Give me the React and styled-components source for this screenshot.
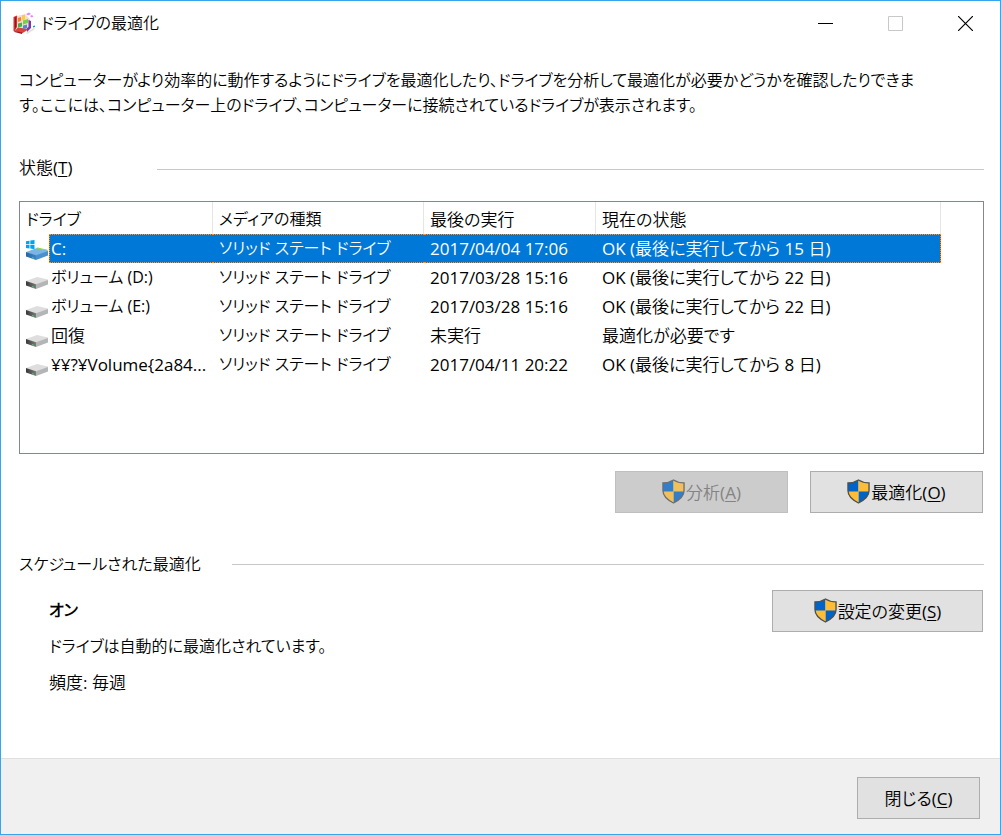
import React, { useState } from "react";
import styled, { createGlobalStyle, css } from "styled-components";

const GlobalStyle = createGlobalStyle`
  *, *::before, *::after { box-sizing: border-box; }
  body {
    margin: 0;
    background: #fff;
    color: #000;
    font: 17px/25px "Open Sans", "Noto Sans CJK JP DemiLight", "Noto Sans CJK JP Light", "Noto Sans CJK JP", sans-serif;
    font-feature-settings: "palt";
  }
`;

const Window = styled.div`
  display: flex;
  flex-direction: column;
  min-height: 100vh;
  border: 1px solid #37a5ec;
`;

const TitleBar = styled.header`
  display: flex;
  align-items: center;
  gap: 5px;
  height: 44px;
  padding-left: 11px;
`;

const Title = styled.h1`
  flex: 1;
  margin: 0;
  font-size: 16px;
  font-weight: 400;
`;

const WindowControls = styled.div`
  display: flex;
`;

const WindowButton = styled.button`
  display: grid;
  place-items: center;
  width: 70px;
  height: 44px;
  padding: 0;
  border: 0;
  background: none;
  color: #000;
  &:disabled { color: #c8c8c8; }
`;

const Main = styled.main`
  flex: 1;
  padding: 23px 16px 24px 18px;
`;

const Intro = styled.p`
  margin: 0;
  font-size: 16px;
`;

const SectionHead = styled.div`
  display: flex;
  align-items: center;
  margin-top: ${(p) => p.$space}px;
`;

const SectionTitle = styled.h2`
  min-width: ${(p) => p.$width}px;
  margin: 0;
  font-size: ${(p) => (p.$kana ? 16 : 17)}px;
  font-weight: 400;
`;

const Rule = styled.hr`
  flex: 1;
  margin: ${(p) => (p.$low ? "4px 0 0" : "0")};
  border: 0;
  border-top: 1px solid #c8c8c8;
`;

const ListBox = styled.div`
  min-height: 253px;
  margin: 21px 0 17px;
  border: 1px solid #828790;
`;

const Table = styled.table`
  width: 100%;
  table-layout: fixed;
  border-collapse: separate;
  border-spacing: 0;
  white-space: nowrap;
`;

const Col = styled.col`
  width: ${(p) => (p.$width ? p.$width + "px" : "auto")};
`;

const HeadCell = styled.th`
  height: 32px;
  padding: 2px 6px 0;
  border-right: 1px solid #e5e5e5;
  font-size: ${(p) => (p.$kana ? 16 : 17)}px;
  font-weight: 400;
  text-align: left;
  &:last-child { border-right: 0; }
`;

const selected = css`
  border-color: #ff9632;
  background: #0078d7;
  color: #fff;
`;

const Cell = styled.td`
  height: 29px;
  padding: 0 6px;
  border: 0 dotted transparent;
  border-width: 1px 0;
  font-size: ${(p) => (p.$kana ? 16 : 17)}px;
  ${(p) => p.$selected && selected}
  ${(p) => p.$end && "border-right-width: 1px;"}
`;

const DriveCell = styled.td`
  height: 29px;
  padding: 0;
`;

const Drive = styled.div`
  display: flex;
  align-items: center;
  padding-left: 5px;
  svg { flex: none; }
`;

const DriveName = styled.span`
  flex: 1;
  min-width: 0;
  height: 29px;
  padding: 0 6px 0 1px;
  border: 1px dotted transparent;
  border-right-width: 0;
  overflow: hidden;
  text-overflow: ellipsis;
  font-size: ${(p) => (p.$kana ? 16 : 17)}px;
  line-height: 27px;
  ${(p) => p.$selected && selected}
`;

const Actions = styled.div`
  display: flex;
  justify-content: flex-end;
  gap: 22px;
  padding-right: 1px;
`;

const Button = styled.button`
  display: flex;
  align-items: center;
  justify-content: center;
  gap: 1px;
  width: ${(p) => p.$width}px;
  height: 42px;
  padding: 0;
  border: 1px solid #adadad;
  background: #e1e1e1;
  color: #000;
  font: inherit;
  svg { margin-bottom: 2px; }
  &:disabled {
    border-color: #bfbfbf;
    background: #ccc;
    color: #838383;
    svg { opacity: 0.75; }
  }
`;

const Schedule = styled.div`
  display: flex;
  justify-content: space-between;
  align-items: flex-start;
  padding: 13px 1px 0 30px;
`;

const Details = styled.div`
  padding-top: 8px;
`;

const Line = styled.p`
  margin: 0 0 11px;
  font-size: ${(p) => (p.$kana ? 16 : 17)}px;
  font-weight: ${(p) => (p.$bold ? 700 : 400)};
`;

const Footer = styled.footer`
  display: flex;
  justify-content: flex-end;
  padding: 18px 20px 15px;
  border-top: 1px solid #dfdfdf;
  background: #f0f0f0;
`;

const Key = styled.u`
  text-underline-offset: 2px;
  text-decoration-thickness: 1px;
`;

const Shield = () => (
  <svg width="23" height="25" viewBox="0 0 24 26" aria-hidden="true">
    <path d="M12 1C9 3 5 4 1 4v8c0 6 5 10 11 13z" fill="#0063c8" />
    <path d="M12 1c3 2 7 3 11 3v8c0 6-5 10-11 13z" fill="#ffbd35" />
    <path d="M12 13v12c6-3 11-7 11-12z" fill="#0063c8" />
    <path d="M12 13v12C6 22 1 18 1 13z" fill="#ffbd35" />
    <path d="M12 1C9 3 5 4 1 4v8c0 6 5 10 11 13 6-3 11-7 11-13V4c-4 0-8-1-11-3z" fill="none" stroke="#505050" strokeWidth="1.4" />
  </svg>
);

const DriveIcon = ({ system }) => (
  <svg width="24" height="26" viewBox="0 0 24 26" aria-hidden="true">
    <defs>
      <linearGradient id={system ? "sysFront" : "front"} x1="0" x2="1">
        <stop offset="0" stopColor={system ? "#2467a0" : "#383838"} />
        <stop offset="1" stopColor={system ? "#3d86c4" : "#7c7c7c"} />
      </linearGradient>
    </defs>
    <path d="M1 16L12 12l11 2.500v1L11 20z" fill={system ? "#7ab6e3" : "#dedede"} />
    <path d="M1 16l10 3.300V24L1 20.500z" fill={`url(#${system ? "sysFront" : "front"})`} />
    <path d="M11 19.300l12-4.300v4.500L11 24z" fill={system ? "#4a90cd" : "#b4b5b6"} />
    <path d="M7 21l2 .7v1L7 22z" fill="#4fd06a" />
    {system && (
      <>
        <path d="M11 12.200l1.500-.7 10 2.200v.8z" fill="#8ed630" />
        <path d="M1 5.200l3.500-.5v3.500H1zM5.300 4.600L9.500 4v4.200H5.300zM1 9h3.500v3.500L1 12zM5.300 9h4.200v4.200l-4.200-.6z" fill="#00a4ee" />
      </>
    )}
  </svg>
);

const AppIcon = () => (
  <svg width="24" height="24" viewBox="0 0 24 24" aria-hidden="true">
    <path d="M14 22l8-5 1 1-8 5z" fill="#dedede" />
    <path d="M5 5l8-2 5 5v10l-9 2-4-3z" fill="#eedfd5" />
    <path d="M1.500 6L5 4.500V16l-2.500 4.500-1-.5z" fill="#d92d2b" />
    <path d="M3 6.500l1-.5v10l-1 2z" fill="#8f1822" />
    <path d="M2.500 20L6 16.500l11 1.500-7 4.500z" fill="#df4038" />
    <path d="M2.500 20l7.500 1.500v1.500L2.500 21z" fill="#9c1720" />
    <path d="M6 7l3-1v4L6 11z" fill="#f47d31" />
    <path d="M10 4.500l3-1v5l-3 1z" fill="#ffc845" />
    <path d="M6 12.500l4-1v4l-4 1z" fill="#45ae4d" />
    <path d="M11 9.500l5-1.500v4l-5 1.500z" fill="#79cf46" />
    <path d="M11 14.500l4-1v3.500l-4 1z" fill="#438de0" />
    <path d="M16.500 9l2.500 1v7l-4 4v-4l1.500-1z" fill="#793ab1" />
    <path d="M14 3l3-1.500 2 1.500-3 1.500zM18 5l2-1 1.500 1.500-2 1z" fill="#dc8af0" />
    <path d="M21 15l2-.5V16l-2 .5z" fill="#2299e5" />
  </svg>
);

const drives = [
  { name: "C:", last: "2017/04/04 17:06", status: "OK (最後に実行してから 15 日)", system: true },
  { name: "ボリューム (D:)", kana: true, last: "2017/03/28 15:16", status: "OK (最後に実行してから 22 日)" },
  { name: "ボリューム (E:)", kana: true, last: "2017/03/28 15:16", status: "OK (最後に実行してから 22 日)" },
  { name: "回復", last: "未実行", status: "最適化が必要です" },
  { name: "¥¥?¥Volume{2a84...", last: "2017/04/11 20:22", status: "OK (最後に実行してから 8 日)" },
];

export default function App() {
  const [current, setCurrent] = useState(0);
  return (
    <Window lang="ja">
      <GlobalStyle />
      <TitleBar>
        <AppIcon />
        <Title>ドライブの最適化</Title>
        <WindowControls>
          <WindowButton aria-label="最小化">
            <svg width="15" height="15"><path d="M0 7.500h15" stroke="currentColor" /></svg>
          </WindowButton>
          <WindowButton aria-label="最大化" disabled>
            <svg width="15" height="15"><path d="M.5.5h14v14H.5z" fill="none" stroke="currentColor" /></svg>
          </WindowButton>
          <WindowButton aria-label="閉じる">
            <svg width="15" height="15"><path d="M0 0l15 15M15 0L0 15" stroke="currentColor" strokeWidth="1.200" /></svg>
          </WindowButton>
        </WindowControls>
      </TitleBar>
      <Main>
        <Intro>
          コンピューターがより効率的に動作するようにドライブを最適化したり、ドライブを分析して最適化が必要かどうかを確認したりできま<br />
          す。ここには、コンピューター上のドライブ、コンピューターに接続されているドライブが表示されます。
        </Intro>
        <SectionHead $space={37}>
          <SectionTitle id="status" $width={138}>状態(<Key>T</Key>)</SectionTitle>
          <Rule $low />
        </SectionHead>
        <ListBox>
          <Table aria-labelledby="status">
            <colgroup>
              <Col $width={193} />
              <Col $width={211} />
              <Col $width={172} />
              <Col $width={345} />
              <Col />
            </colgroup>
            <thead>
              <tr>
                <HeadCell $kana>ドライブ</HeadCell>
                <HeadCell $kana>メディアの種類</HeadCell>
                <HeadCell>最後の実行</HeadCell>
                <HeadCell>現在の状態</HeadCell>
                <HeadCell />
              </tr>
            </thead>
            <tbody>
              {drives.map((d, i) => (
                <tr key={d.name} onClick={() => setCurrent(i)} aria-selected={i === current}>
                  <DriveCell>
                    <Drive>
                      <DriveIcon system={d.system} />
                      <DriveName $kana={d.kana} $selected={i === current}>{d.name}</DriveName>
                    </Drive>
                  </DriveCell>
                  <Cell $kana $selected={i === current}>ソリッド ステート ドライブ</Cell>
                  <Cell $selected={i === current}>{d.last}</Cell>
                  <Cell $selected={i === current} $end>{d.status}</Cell>
                  <td />
                </tr>
              ))}
            </tbody>
          </Table>
        </ListBox>
        <Actions>
          <Button $width={173} disabled><Shield /><span>分析(<Key>A</Key>)</span></Button>
          <Button $width={173}><Shield /><span>最適化(<Key>O</Key>)</span></Button>
        </Actions>
        <SectionHead $space={39}>
          <SectionTitle $kana $width={213}>スケジュールされた最適化</SectionTitle>
          <Rule />
        </SectionHead>
        <Schedule>
          <Details>
            <Line $kana $bold>オン</Line>
            <Line $kana>ドライブは自動的に最適化されています。</Line>
            <Line>頻度: 毎週</Line>
          </Details>
          <Button $width={211}><Shield /><span>設定の変更(<Key>S</Key>)</span></Button>
        </Schedule>
      </Main>
      <Footer>
        <Button $width={123}><span>閉じる(<Key>C</Key>)</span></Button>
      </Footer>
    </Window>
  );
}
